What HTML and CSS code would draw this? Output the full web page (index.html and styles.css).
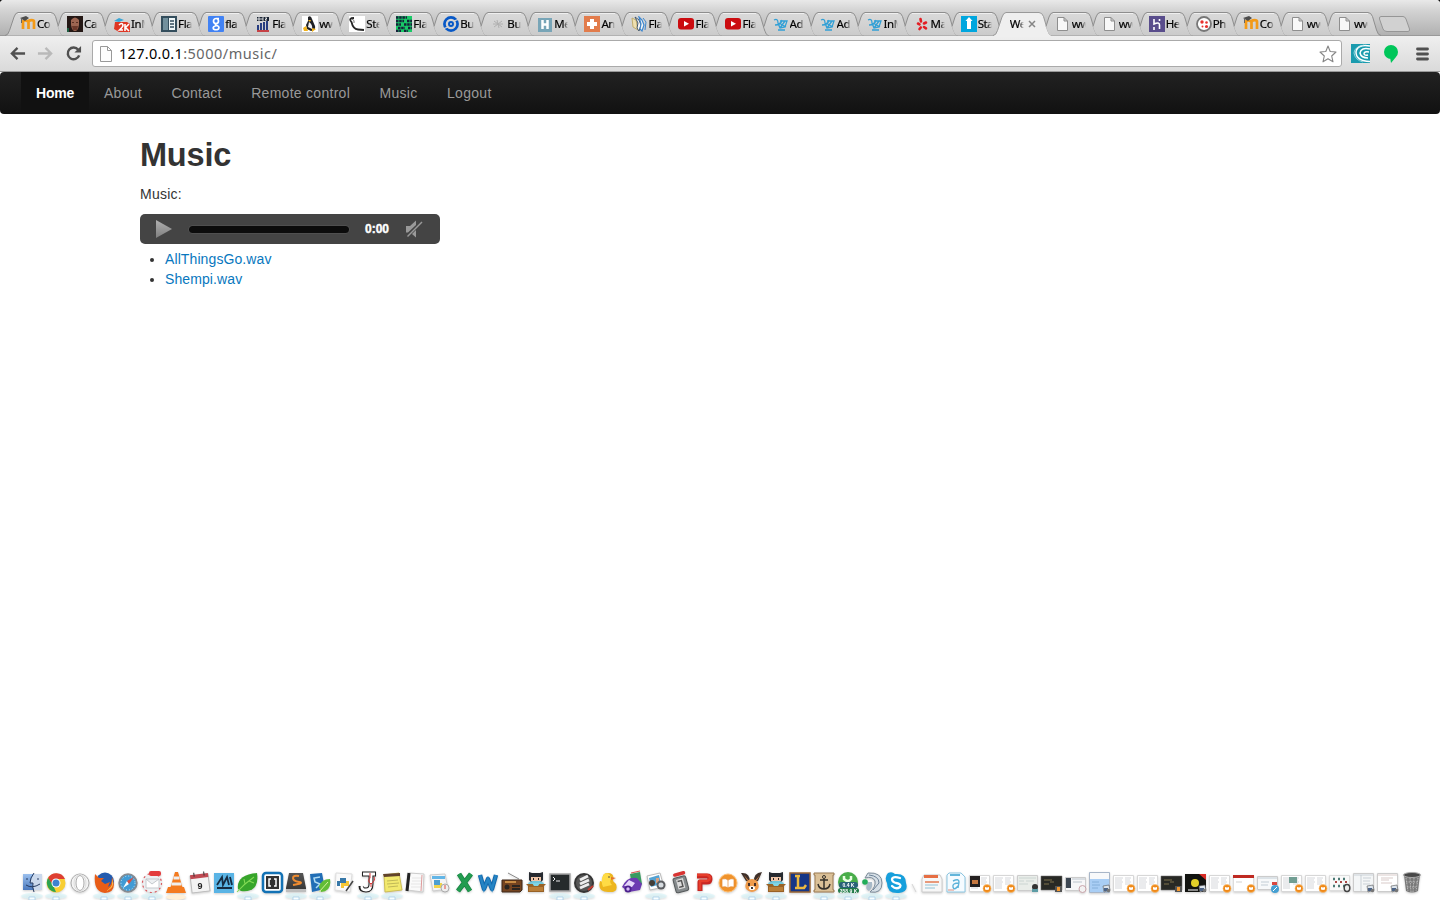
FILE: index.html
```html
<!DOCTYPE html>
<html lang="en">
<head>
<meta charset="utf-8">
<title>Welcome</title>
<link rel="stylesheet" href="styles.css">
</head>
<body>
<svg class="defs" width="0" height="0">
  <defs>
    <linearGradient id="tabfill" x1="0" y1="0" x2="0" y2="1"><stop offset="0" stop-color="#dadada"/><stop offset="1" stop-color="#cbcbcb"/></linearGradient>
    <linearGradient id="metal" x1="0" y1="0" x2="0" y2="1"><stop offset="0" stop-color="#b0b0b0"/><stop offset="1" stop-color="#7f7f7f"/></linearGradient>
    <linearGradient id="blue" x1="0" y1="0" x2="0" y2="1"><stop offset="0" stop-color="#9bc0ee"/><stop offset="1" stop-color="#4b79bd"/></linearGradient>
    <linearGradient id="dark" x1="0" y1="0" x2="0" y2="1"><stop offset="0" stop-color="#555"/><stop offset="1" stop-color="#333"/></linearGradient>
    <symbol id="tab" viewBox="0 0 60 24" overflow="visible"><path fill="url(#tabfill)" d="M6 14.5 9 5Q10.500 .5 13 .5H46Q49 .5 50.500 4.500L54.500 18Q56 23.500 59 23.500H12Q9 23.500 7.500 19Z"/><path fill="none" stroke="#8e8e8e" d="M6 14.500 9 5Q10.500 .5 13 .5H46Q49 .5 50.500 4.500L54.500 18Q56 23.500 59 23.500"/><path stroke="#efefef" d="M13 1.500H46"/></symbol>
    <symbol id="tab-first" viewBox="0 0 60 24" overflow="visible"><path fill="url(#tabfill)" stroke="#8e8e8e" d="M0 23.500Q3 23.500 4.500 18.500L9 5Q10.500 .5 13 .5H46Q49 .5 50.500 4.500L54.500 18Q56 23.500 59 23.500"/><path stroke="#efefef" d="M13 1.500H46"/></symbol>
    <symbol id="tab-active" viewBox="0 0 60 24" overflow="visible"><path fill="#efefef" stroke="#999" d="M0 23.500Q3 23.500 4.500 18.500L9 5Q10.500 .5 13 .5H46Q49 .5 50.500 4.500L54.500 18Q56 23.500 59 23.500"/><path stroke="#efefef" stroke-width="2" d="M1.500 24H57.500"/></symbol>

    <symbol id="f-moodle" viewBox="0 0 16 16"><path fill="none" stroke="#f39a17" stroke-width="2.700" d="M3 13V6q0-1.500 2-1.500T8.500 6V13M8.500 13V6q0-1.800 3-1.800T14 6V13"/><path fill="#4d4d4d" d="M0 2 6 0 9 2 5 5Z"/><path stroke="#666" d="M1.500 2V7"/></symbol>
    <symbol id="f-face" viewBox="0 0 16 16"><path fill="#241815" d="M0 0H16V16H0Z"/><path fill="#9d6652" d="M4 4Q8-1 12 4V9Q11 15 8 15T4 9Z"/><path fill="#6d3a2c" d="M5 10H11L10 14H6Z"/><path fill="#5a3024" d="M5 6H7V7H5ZM9 6H11V7H9Z"/><path fill="#1d5c40" d="M0 12H2V16H0Z"/></symbol>
    <symbol id="f-2k" viewBox="0 0 16 16"><path fill="#3aa5d5" d="M0 5 5 2 10 4 5 6Z"/><path fill="#df3724" d="M1 6H13L16 8V16H5L0 13Z"/><path fill="none" stroke="#fff" stroke-width="1.600" d="M5 9Q8 6 9 9 9 11 5.500 14H9M11 8V15M15 8 11.500 11.500 15 15"/></symbol>
    <symbol id="f-book" viewBox="0 0 16 16"><path fill="#344e5d" d="M0 0H16V16H0Z"/><path fill="#72909d" d="M2 2H7V14H2Z"/><path fill="#eef6f8" d="M8 2H14V14H8Z"/><path stroke="#344e5d" stroke-width="1.500" d="M9 5H13M9 8H13M9 11H13"/></symbol>
    <symbol id="f-google" viewBox="0 0 16 16"><rect width="16" height="16" rx="1" fill="#4182f4"/><path fill="none" stroke="#fff" stroke-width="1.700" d="M11 2.500H7.500M8 2.500A2.500 2.500 0 1 0 8 7.500 2.500 2.500 0 1 0 8 2.500M7.500 7.500Q7 9 9 9.500 12 11 10.500 13 8 14.500 5.500 13 4 10.500 9 9.500"/></symbol>
    <symbol id="f-dc" viewBox="0 0 16 16"><path fill="#192333" d="M2 1H14V5H2Z"/><path fill="none" stroke="#fff" stroke-width=".8" d="M3 2H5V4H3ZM9 2H7V4H9M10 2H12L10 4H12"/><path stroke="#263c80" stroke-width="2" d="M3 9V14M6 7V14M9 6V14M12 5V14"/><path stroke="#c64145" stroke-width="2" d="M2 15H14"/></symbol>
    <symbol id="f-tux" viewBox="0 0 16 16"><path fill="#fff" d="M0 0H16V16H0Z"/><path fill="#202124" d="M6 1Q9-1 10 3L13 10Q14 14 9 15L5 13 4 9 6 5Z"/><path fill="#f2f2f2" d="M7 6Q11 9 10 13L6 11Z"/><path fill="#f1b21b" d="M6 4H9L8 6ZM1 12 4 10 6 15 2 15ZM10 12 14 13 10 16Z"/></symbol>
    <symbol id="f-horn" viewBox="0 0 16 16"><path fill="#fff" d="M0 0H16V16H0Z"/><path fill="none" stroke="#262626" stroke-width="1.800" d="M5 2Q-1 2 2.500 6 4 13 9 13.500L15 14"/><path fill="none" stroke="#777" d="M3 3Q6 4 5 7"/></symbol>
    <symbol id="f-grid" viewBox="0 0 16 16"><path fill="#19c967" d="M0 0H16V16H0Z"/><path stroke="#15213a" stroke-width="2.300" stroke-dasharray="2.500 .7" d="M0 1.500H11M0 5H8M11 5H16M0 8.500H5M8 8.500H16M2 12H9M12 12H16M0 15H5M8 15H12"/></symbol>
    <symbol id="f-swirl" viewBox="0 0 16 16"><circle cx="8" cy="8" r="6.600" fill="none" stroke="#0758c7" stroke-width="2.700"/><circle cx="8" cy="8" r="2" fill="none" stroke="#0758c7" stroke-width="2"/><path stroke="#d5d5d5" stroke-width="1.200" d="M0 13 5 11M11 5 16 3"/></symbol>
    <symbol id="f-spark" viewBox="0 0 16 16"><path stroke="#b0b0b0" d="M4 5 12 11M4 11 12 5M7 4 9 12M3 8 13 8"/></symbol>
    <symbol id="f-h" viewBox="0 0 16 16"><path fill="#78a5b7" d="M1 2H15V16H1Z"/><path fill="none" stroke="#fff" stroke-width="2.500" d="M5.500 4V13M10.500 4V13M5 8.500H11"/></symbol>
    <symbol id="f-plus" viewBox="0 0 16 16"><path fill="#e27c4c" d="M0 0H16V16H0Z"/><path stroke="#fff" stroke-width="4" d="M8 3V13M3 8H13"/></symbol>
    <symbol id="f-pages" viewBox="0 0 16 16"><path fill="#eee0b0" stroke="#c1ad6e" d="M1 2 5 4 7 14 2 11Z"/><path fill="#f5f5f5" stroke="#43576c" d="M4 1 8 4 10 9 8 15 6 12 7 7Z"/><path fill="#f5f5f5" stroke="#3d87cf" stroke-width="1.200" d="M8 1 11 4 13 9 11 15 9 13 10 8Z"/><path fill="none" stroke="#3d87cf" d="M12 2 15 6 14 14"/></symbol>
    <symbol id="f-yt" viewBox="0 0 16 16"><rect y="2" width="16" height="11.500" rx="3" fill="#cb0c10"/><path fill="#fff" d="M6 5 11 7.800 6 10.500Z"/></symbol>
    <symbol id="f-cart" viewBox="0 0 16 16"><path fill="none" stroke="#32a0d6" stroke-width="1.300" d="M1 4Q5 2 5 7L7 12 12 11 14 5 7 5M2 9Q8 9 9 4M6 7 13 11M12 5 7 12M5 14H12"/></symbol>
    <symbol id="f-yelp" viewBox="0 0 16 16"><path stroke="#e31d23" stroke-width="2.600" stroke-linecap="round" d="M6.500 3 7 5.500M4 7.500 5.500 8.300M5.500 13 6.800 11.500M10 7.500 12 6.500M10 11 12 12.300"/></symbol>
    <symbol id="f-arrow" viewBox="0 0 16 16"><path fill="#00a6de" d="M0 0H16V16H0Z"/><path fill="#fff" d="M8 1 11.500 5H10V13H6V5H4.500Z"/></symbol>
    <symbol id="f-file" viewBox="0 0 16 16"><path fill="#f8f8f8" stroke="#8e8e8e" d="M2.500 1.500H9L12.500 5V14.500H2.500ZM9 1.500V5H12.500"/></symbol>
    <symbol id="f-heroku" viewBox="0 0 16 16"><path fill="#594d8c" d="M0 0H16V16H0Z"/><path fill="none" stroke="#fff" stroke-width="1.600" d="M5 3V8Q10.500 5.500 10.500 9V13M5 11V14M10.500 3V5"/></symbol>
    <symbol id="f-phi" viewBox="0 0 16 16"><circle cx="8" cy="8" r="7" fill="#fff" stroke="#777" stroke-width="1.800"/><g fill="#e8302c"><circle cx="6" cy="6" r="1.700"/><circle cx="10.500" cy="6.500" r="1.300"/><circle cx="6.500" cy="10.500" r="1"/><circle cx="10.500" cy="10.500" r="1.600"/></g></symbol>

    <symbol id="octo" viewBox="0 0 24 30"><path fill="#272b31" d="M5 2 8 3H16L19 2V10L17 12H7L5 10Z"/><path fill="#f1c5a7" d="M7 7H17V11H7Z"/><path fill="#222" d="M9 8H10V10H9ZM14 8H15V10H14Z"/><path fill="#72c7dc" d="M4 13 8 11H16L20 13 18 17H6Z"/><path fill="#986226" d="M2 14H22L20 16V22H4V16Z"/><path fill="#b97e38" d="M5 17H19V21H5Z"/><path fill="#80d5e5" d="M8 13H16L14 16H10Z"/></symbol>
    <symbol id="doc" viewBox="0 0 24 30"><path fill="#fff" stroke="#d7d7d7" d="M1.500 5.500H21.500V21.500H1.500Z"/><path stroke="#c3c5cc" stroke-width=".7" d="M3 8H11M13 8H19M3 10H10M13 10H18M3 12H11M13 12H19M3 14H10M3 16H10M13 14H18M3 18H10"/></symbol>
    <symbol id="badge" viewBox="0 0 24 30"><circle cx="19" cy="18.500" r="4" fill="#ef8919" stroke="#f9bd70" stroke-width=".6"/><path fill="#fff" d="M17 17 19 17.500 21 17V19.500L19 20 17 19.500Z"/></symbol>
    <symbol id="badge-photo" viewBox="0 0 24 30"><path fill="#dce4ec" stroke="#555" stroke-width=".6" d="M15 16 21 15 22 20 16 22Z"/><path fill="#4c6488" d="M16 18H20V21H16Z"/><circle cx="20.500" cy="20.500" r="1.800" fill="#767676"/></symbol>
    <symbol id="term" viewBox="0 0 24 30"><path fill="#282925" stroke="#777" stroke-width=".5" d="M1 6H22V20H1Z"/><path stroke="#a5925b" stroke-width=".7" d="M4 10H12M4 14H9M10 12H14"/><path fill="#555" d="M15 16H22V22H15Z"/><path fill="#f39a32" d="M17 17H20V21H17Z"/></symbol>
    <symbol id="run" viewBox="0 0 24 30"><ellipse cx="12" cy="26" rx="11" ry="3" fill="#d9f6fb" opacity=".65"/><path fill="#f9feff" stroke="#aacfea" stroke-width=".8" d="M9 27H15V30H9Z"/></symbol>
  </defs>
</svg>

<header class="tabs">
  <div class="tab"><svg class="shape"><use href="#tab-first"/></svg><svg class="fav"><use href="#f-moodle"/></svg><span>Co</span></div>
  <div class="tab"><svg class="shape"><use href="#tab"/></svg><svg class="fav"><use href="#f-face"/></svg><span>Ca</span></div>
  <div class="tab"><svg class="shape"><use href="#tab"/></svg><svg class="fav"><use href="#f-2k"/></svg><span>InM</span></div>
  <div class="tab"><svg class="shape"><use href="#tab"/></svg><svg class="fav"><use href="#f-book"/></svg><span>Fla</span></div>
  <div class="tab"><svg class="shape"><use href="#tab"/></svg><svg class="fav"><use href="#f-google"/></svg><span>fla</span></div>
  <div class="tab"><svg class="shape"><use href="#tab"/></svg><svg class="fav"><use href="#f-dc"/></svg><span>Fla</span></div>
  <div class="tab"><svg class="shape"><use href="#tab"/></svg><svg class="fav"><use href="#f-tux"/></svg><span>ww</span></div>
  <div class="tab"><svg class="shape"><use href="#tab"/></svg><svg class="fav"><use href="#f-horn"/></svg><span>Ste</span></div>
  <div class="tab"><svg class="shape"><use href="#tab"/></svg><svg class="fav"><use href="#f-grid"/></svg><span>Fla</span></div>
  <div class="tab"><svg class="shape"><use href="#tab"/></svg><svg class="fav"><use href="#f-swirl"/></svg><span>Bu</span></div>
  <div class="tab"><svg class="shape"><use href="#tab"/></svg><svg class="fav"><use href="#f-spark"/></svg><span>Bu</span></div>
  <div class="tab"><svg class="shape"><use href="#tab"/></svg><svg class="fav"><use href="#f-h"/></svg><span>Me</span></div>
  <div class="tab"><svg class="shape"><use href="#tab"/></svg><svg class="fav"><use href="#f-plus"/></svg><span>An</span></div>
  <div class="tab"><svg class="shape"><use href="#tab"/></svg><svg class="fav"><use href="#f-pages"/></svg><span>Fla</span></div>
  <div class="tab"><svg class="shape"><use href="#tab"/></svg><svg class="fav"><use href="#f-yt"/></svg><span>Fla</span></div>
  <div class="tab"><svg class="shape"><use href="#tab"/></svg><svg class="fav"><use href="#f-yt"/></svg><span>Fla</span></div>
  <div class="tab"><svg class="shape"><use href="#tab"/></svg><svg class="fav"><use href="#f-cart"/></svg><span>Ad</span></div>
  <div class="tab"><svg class="shape"><use href="#tab"/></svg><svg class="fav"><use href="#f-cart"/></svg><span>Ad</span></div>
  <div class="tab"><svg class="shape"><use href="#tab"/></svg><svg class="fav"><use href="#f-cart"/></svg><span>InM</span></div>
  <div class="tab"><svg class="shape"><use href="#tab"/></svg><svg class="fav"><use href="#f-yelp"/></svg><span>Ma</span></div>
  <div class="tab"><svg class="shape"><use href="#tab"/></svg><svg class="fav"><use href="#f-arrow"/></svg><span>Sta</span></div>
  <div class="tab active"><svg class="shape"><use href="#tab-active"/></svg><span>We</span><svg class="close" viewBox="0 0 8 8"><path stroke="#858585" stroke-width="1.500" d="M1 1 7 7M7 1 1 7"/></svg></div>
  <div class="tab"><svg class="shape"><use href="#tab"/></svg><svg class="fav"><use href="#f-file"/></svg><span>ww</span></div>
  <div class="tab"><svg class="shape"><use href="#tab"/></svg><svg class="fav"><use href="#f-file"/></svg><span>ww</span></div>
  <div class="tab"><svg class="shape"><use href="#tab"/></svg><svg class="fav"><use href="#f-heroku"/></svg><span>He</span></div>
  <div class="tab"><svg class="shape"><use href="#tab"/></svg><svg class="fav"><use href="#f-phi"/></svg><span>Ph</span></div>
  <div class="tab"><svg class="shape"><use href="#tab"/></svg><svg class="fav"><use href="#f-moodle"/></svg><span>Co</span></div>
  <div class="tab"><svg class="shape"><use href="#tab"/></svg><svg class="fav"><use href="#f-file"/></svg><span>ww</span></div>
  <div class="tab"><svg class="shape"><use href="#tab"/></svg><svg class="fav"><use href="#f-file"/></svg><span>ww</span></div>
  <svg class="newtab" viewBox="0 0 34 17"><path fill="#d1d1d1" stroke="#969696" d="M3 .5H25Q27 .5 28 3L31.500 13Q32 15.500 30 15.500H9Q6 15.500 5 13L1.500 3Q1 .5 3 .5Z"/></svg>
</header>

<div class="toolbar">
  <svg class="tool" viewBox="0 0 18 18"><path fill="none" stroke="#505050" stroke-width="2.400" d="M17 9H4M9 3 3 9 9 15"/></svg>
  <svg class="tool forward" viewBox="0 0 18 18"><path fill="none" stroke="#b9b9b9" stroke-width="2.400" d="M1 9H14M9 3 15 9 9 15"/></svg>
  <svg class="tool reload" viewBox="0 0 18 18"><path fill="none" stroke="#505050" stroke-width="2.600" d="M14 5A6.200 6.200 0 1 0 15 11"/><path fill="#505050" d="M17 1V8H10Z"/></svg>
  <div class="address">
    <svg class="page" viewBox="0 0 12 16"><path fill="#fcfcfc" stroke="#999" d="M.5.5H7.500L11.500 4.500V15.500H.5ZM7.500.5V4.500H11.500"/></svg>
    <span class="url"><b>127.0.0.1</b>:5000/music/</span>
    <svg class="star" viewBox="0 0 18 18"><path fill="#fff" stroke="#858585" stroke-width="1.100" stroke-linejoin="round" d="M9 1 11.200 6.500 17 7 12.700 11 14 16.800 9 13.800 4 16.800 5.300 11 1 7 6.800 6.500Z"/></svg>
  </div>
  <svg class="ext" viewBox="0 0 19 19"><path fill="#1b9bae" d="M0 0H19V19H0Z"/><path fill="none" stroke="#fff" stroke-width="1.500" d="M19 2Q6 0 5 8 5 17 19 17.500M19 5Q10 3 9 9 10 14 17 14M18 8Q13 7 13 10 14 12 17 11"/><path fill="none" stroke="#aee4e9" stroke-width=".8" d="M13 1Q3 3 3 9 4 16 12 18"/></svg>
  <svg class="bubble" viewBox="0 0 14 18"><path fill="#00c65a" d="M7 0A7 7 0 1 1 7 14 7 7 0 1 1 7 0ZM6 12H12L7 18Z"/></svg>
  <svg class="menu" viewBox="0 0 13 14"><path stroke="#505050" stroke-width="2.800" stroke-linecap="round" d="M1.500 2H11.500M1.500 7H11.500M1.500 12H11.500"/></svg>
</div>

<nav class="navbar">
  <a class="current">Home</a><a>About</a><a>Contact</a><a>Remote control</a><a>Music</a><a>Logout</a>
</nav>

<main>
  <h1>Music</h1>
  <p>Music:</p>
  <div class="player">
    <svg class="play" viewBox="0 0 16 18"><path fill="url(#metal)" d="M0 0 16 9 0 18Z"/></svg>
    <div class="track"></div>
    <span class="time">0:00</span>
    <svg class="mute" viewBox="0 0 17 18"><path fill="#999" d="M0 6H4L10 .5V5L2 12.500H0ZM6 14 10 10V17.500Z"/><path stroke="#999" stroke-width="1.500" d="M1.500 16.500 16 2"/></svg>
  </div>
  <ul><li><a>AllThingsGo.wav</a></li><li><a>Shempi.wav</a></li></ul>
</main>

<footer class="dock">
  <svg viewBox="0 0 24 30"><use href="#run"/><path fill="url(#blue)" d="M3 4H22V20H3Z"/><path fill="#cbd9ec" d="M14 4H22V20H14Q12 15 13 13H10Q11 8 14 4Z"/><path fill="none" stroke="#263b61" d="M14 3Q10 8 10 13H13Q12 17 14 22M7 8V10M18 8V10M6 15Q12 19 20 14"/></svg>
  <svg viewBox="0 0 24 30"><use href="#run"/><circle cx="12" cy="13" r="9.500" fill="#f8ce32"/><path fill="#de3e32" d="M4 8A9.500 9.500 0 0 1 21 9H12L8 15Z"/><path fill="#2ca250" d="M4 8 9 15 12 22A9.500 9.500 0 0 1 4 8Z"/><circle cx="12" cy="13" r="4.500" fill="#fff"/><circle cx="12" cy="13" r="3.500" fill="#3d82cf"/></svg>
  <svg viewBox="0 0 24 30"><circle cx="12" cy="13" r="9" fill="#f4f4f4" stroke="#ababab"/><ellipse cx="12" cy="13" rx="4" ry="7.500" fill="#fff" stroke="#aaa"/><ellipse cx="12" cy="13" rx="6" ry="8.500" fill="none" stroke="#ddd"/></svg>
  <svg viewBox="0 0 24 30"><use href="#run"/><circle cx="13" cy="11.500" r="9" fill="#245bae"/><path fill="#e85d17" d="M3 4 7 8 12 8 9 11 13 14 18 12 16 17Q20 15 20 7 26 22 13 23 1 22 3 4Z"/><path fill="#ffc34a" d="M20 8Q24 19 13 21 22 18 20 8Z"/></svg>
  <svg viewBox="0 0 24 30"><use href="#run"/><circle cx="12" cy="13" r="8.800" fill="#419bd5" stroke="#858b91" stroke-width="1.800"/><circle cx="12" cy="13" r="7" fill="none" stroke="#c7e7f7" stroke-dasharray="1 2"/><path fill="#fff" d="M7 18 11 11 13 14Z"/><path fill="#df4e3f" d="M18 7 11 11 13 14Z"/></svg>
  <svg viewBox="0 0 24 30"><use href="#run"/><circle cx="12" cy="13" r="9.500" fill="#edf0f2" stroke="#d95b61" stroke-width="1.200" stroke-dasharray="2 3"/><path fill="#fff" stroke="#c5c9cd" d="M6 9H19V18H6ZM6 9 12 14 19 9"/><rect x="9" y="1" width="12" height="5" rx="2" fill="#e33c3d"/></svg>
  <svg viewBox="0 0 24 30"><ellipse cx="12" cy="27" rx="10" ry="3" fill="#fff0d8"/><path fill="#f47b20" d="M11 2H14L19 19H6ZM4 17H20L22 23H2Z"/><path stroke="#eee" stroke-width="3" d="M9.500 8H15.500M7.500 14H17.500"/></svg>
  <svg viewBox="0 0 24 30"><g transform="rotate(-7 12 13)"><path fill="#f3f3f3" stroke="#bbb" d="M3 5H21V22H3Z"/><path fill="#bf4a52" d="M3 4H21V8H3Z"/><path stroke="#333" d="M7 2V6M17 2V6"/></g><text x="12" y="18.500" class="date">9</text></svg>
  <svg viewBox="0 0 24 30"><path fill="#5ab4e5" d="M2 3H22V23H2Z"/><path fill="none" stroke="#152c42" stroke-width="1.800" d="M5 15 10 7 11 15 15 7 17 15M18 7 20 15M5 18H20"/></svg>
  <svg viewBox="0 0 24 30"><use href="#run"/><path fill="#37a52b" d="M2 19Q0 5 21 3 24 23 5 21Z"/><path fill="none" stroke="#84db55" stroke-width="1.100" d="M1 22Q8 14 18 7M9 14 8 9M13 11 18 13"/></svg>
  <svg viewBox="0 0 24 30"><rect x="3" y="3" width="19" height="19" rx="3" fill="#fff" stroke="#1372b5" stroke-width="2.500"/><path fill="#333" d="M6 6H19V19H6Z"/><path fill="none" stroke="#fff" stroke-width="1.500" d="M11 9H9V16H11M14 9H16V16H14"/></svg>
  <svg viewBox="0 0 24 30"><use href="#run"/><path fill="url(#dark)" d="M5 3H19L22 18V22H2V18Z"/><path fill="#bdbdbd" d="M2 19H22V22H2Z"/><path fill="none" stroke="#ee8b30" stroke-width="2" d="M15 6Q9 5 9 8T15 12 9 15"/></svg>
  <svg viewBox="0 0 24 30"><use href="#run"/><path fill="#216eb6" d="M2 4 14 3 17 19 4 22Z"/><path fill="none" stroke="#b0dcf4" stroke-width="1.500" d="M12 7 6 8 7 12 12 14 8 18"/><path fill="#62bd36" d="M11 17Q13 9 22 9 24 21 13 22Z"/><path stroke="#d7f3a0" d="M11 22 20 12"/></svg>
  <svg viewBox="0 0 24 30"><path fill="#fafafa" stroke="#ddd" d="M4 3 20 4 18 22 3 20Z"/><path fill="#3778a8" d="M8 8H14V13H8V16H5V11H8Z"/><path fill="#f6c736" d="M14 11H17V16H12V18H9V13H14Z"/><path stroke="#454545" stroke-width="1.500" d="M14 21 21 11"/></svg>
  <svg viewBox="0 0 24 30"><use href="#run"/><path fill="none" stroke="#222" stroke-width="5" d="M6 4H20M15 4V14Q15 20 10 20T5 16"/><path fill="none" stroke="#fff" stroke-width="2.800" d="M7 4H19M15 4V14Q15 20 10 20T6 16"/><path fill="none" stroke="#d63434" d="M14 3V8Q11 11 15 14 20 10 18 7M15 14V17"/></svg>
  <svg viewBox="0 0 24 30"><use href="#run"/><path fill="#f2e96e" stroke="#cdbd55" d="M4 5 19 3 22 20 5 22Z"/><path fill="#61432b" d="M3 4 20 3V6L4 7Z"/><path stroke="#aaa44d" stroke-width=".7" d="M7 11 18 10M7 14 19 13M8 17 18 16"/></svg>
  <svg viewBox="0 0 24 30"><path fill="#fafafa" stroke="#ccc" d="M5 3 20 4 19 22 3 20Z"/><path stroke="#222" stroke-width="3" d="M5 3 3 21"/><path stroke="#ddd" stroke-width=".7" d="M8 8H18M8 11H18M7 14H17M7 17H17"/><path stroke="#df9a9a" d="M18 5 17 21"/></svg>
  <svg viewBox="0 0 24 30"><path fill="#f4f4f4" stroke="#ccc" d="M2 5 17 4 20 19 5 21Z"/><path fill="#63b6e7" d="M4 6H17V9H4Z"/><path fill="#efd34d" d="M6 13H14V18H6Z"/><path fill="#4c9fd1" d="M6 10H12V15H6Z"/><circle cx="17" cy="18" r="4" fill="#eee" stroke="#aaa"/><path stroke="#df5148" d="M17 15V19"/></svg>
  <svg viewBox="0 0 24 30"><path fill="none" stroke="#178442" stroke-width="5" d="M7 4 18 21M19 4 6 21"/><path fill="none" stroke="#229c50" stroke-width="3.500" d="M7 4 18 21M19 4 6 21"/></svg>
  <svg viewBox="0 0 24 30"><path fill="none" stroke="#1469ad" stroke-width="4.500" stroke-linejoin="round" d="M4 5 8 19 12 9 16 19 20 5"/><path fill="none" stroke="#2584c4" stroke-width="2.500" d="M4 5 8 19 12 9 16 19 20 5"/></svg>
  <svg viewBox="0 0 24 30"><path stroke="#888" d="M8 3 19 9"/><path fill="#754420" stroke="#3c2618" d="M2 10H22V20L20 22H2Z"/><path fill="#c78b43" d="M5 11H16V13H5Z"/><circle cx="7" cy="17" r="2.500" fill="#2b2520"/><path stroke="#2b2520" stroke-width="2" d="M12 16H20M12 19H20"/></svg>
  <svg viewBox="0 0 24 30"><use href="#octo"/></svg>
  <svg viewBox="0 0 24 30"><use href="#run"/><path fill="#262b2c" stroke="#a7a7a7" stroke-width="1.500" d="M2 4H22V21H2Z"/><path fill="none" stroke="#eee" d="M5 7 7 9 5 11M8 11H12"/></svg>
  <svg viewBox="0 0 24 30"><use href="#run"/><circle cx="12" cy="13" r="9" fill="#555" stroke="#353535" stroke-width="2"/><path stroke="#eee" stroke-width="3" d="M8 10 16 6M8 14 17 10M8 18 17 14"/><path stroke="#c63d33" stroke-width="2" d="M16 20 21 16"/></svg>
  <svg viewBox="0 0 24 30"><path fill="#edb61e" d="M7 12Q5 3 12 3T17 11L20 14Q23 23 12 22 1 22 4 11Z"/><path fill="#ffdc45" d="M8 4Q14 1 15 9 13 12 16 15L7 17Q4 10 8 4Z"/><circle cx="13" cy="7" r=".8" fill="#444"/><path fill="#e5732f" d="M15 7 20 8 15 10Z"/></svg>
  <svg viewBox="0 0 24 30"><path fill="#399a61" d="M10 4 20 2 22 14 12 16Z"/><path fill="#6c3ab1" d="M2 17Q7 6 17 8L22 14 20 20 9 22Z"/><path fill="#e5d6fa" d="M4 16 9 10 15 13 12 17Z"/><circle cx="8" cy="19" r="3.500" fill="#4b208e"/><circle cx="8" cy="19" r="1.700" fill="#d6baf7"/><path stroke="#df544e" d="M11 3 20 1"/></svg>
  <svg viewBox="0 0 24 30"><use href="#run"/><path fill="#fff" stroke="#bbb" d="M3 6 16 3 20 17 6 20Z"/><path fill="#55a2d2" d="M5 8 15 5 17 14 7 17Z"/><circle cx="8" cy="13" r="3" fill="#433d37"/><path fill="#d9a07f" d="M12 8H15V13H12Z"/><circle cx="17" cy="15" r="4.500" fill="#5b5d61"/><circle cx="17" cy="15" r="2.500" fill="#d8dde1"/></svg>
  <svg viewBox="0 0 24 30"><g transform="rotate(-15 12 13)"><rect x="6" y="7" width="13" height="15" rx="2" fill="#858a8c" stroke="#54585a"/><path fill="#ddd" d="M9 9H16V19H9Z"/><path fill="none" stroke="#555" stroke-width="1.500" d="M10 11H14V17H10"/><path stroke="#d93432" stroke-width="3.500" stroke-linecap="round" d="M9 4H18"/></g></svg>
  <svg viewBox="0 0 24 30"><use href="#run"/><path fill="none" stroke="#c82622" stroke-width="5" stroke-linejoin="round" d="M5 6H15Q18 6 18 9T15 12H8V21"/><path fill="none" stroke="#e63d2b" stroke-width="2.500" d="M5 5H15Q18 6 18 8T15 11H8V20"/></svg>
  <svg viewBox="0 0 24 30"><circle cx="12" cy="13" r="9" fill="#f0932b" stroke="#ffbd70"/><path fill="#fff" stroke="#e28b35" stroke-width=".7" d="M6 9Q10 8 12 10 15 8 18 9V17Q14 16 12 18 10 16 6 17ZM12 10V18"/></svg>
  <svg viewBox="0 0 24 30"><use href="#run"/><path fill="#3f3029" d="M1 3Q10 2 10 12L6 11ZM22 2Q13 3 14 12L18 11Z"/><path fill="#dc8a48" d="M4 5 9 11 7 10ZM20 5 15 11 17 10Z"/><path fill="#ef9c4c" d="M7 11Q12 7 17 11 22 20 12 22 2 20 7 11Z"/><path fill="#493228" d="M8 13H10V16H8ZM14 13H16V16H14Z"/><ellipse cx="12" cy="18" rx="3" ry="2" fill="#fff"/><path fill="#333" d="M11 17H13V19H11Z"/></svg>
  <svg viewBox="0 0 24 30"><use href="#run"/><use href="#octo"/></svg>
  <svg viewBox="0 0 24 30"><path fill="#163686" stroke="#9b6533" stroke-width="1.500" d="M2 3H22V22H2Z"/><path fill="none" stroke="#ecb940" stroke-width="2.500" d="M7 6H12M10 6V18H16L18 15M7 18H11"/></svg>
  <svg viewBox="0 0 24 30"><use href="#run"/><path fill="#dac097" stroke="#9a7b52" d="M2 3H22V5H21V20H22V22H2V20H3V5H2Z"/><path fill="none" stroke="#34302a" stroke-width="1.500" d="M12 9V19M8 10H16M6 14Q7 19 12 19T18 14"/><circle cx="12" cy="7" r="1.500" fill="none" stroke="#34302a"/></svg>
  <svg viewBox="0 0 24 30"><use href="#run"/><circle cx="12" cy="12" r="10" fill="#48ad49"/><path fill="none" stroke="#eaffe3" stroke-width="2.500" d="M8 6V9Q12 13 15 9V6"/><rect x="3" y="12" width="19" height="6" rx="3" fill="#286177"/><rect x="2" y="18" width="21" height="5" rx="2.500" fill="#207a47"/><text x="12.500" y="17" class="rate">0.4 K</text><text x="12.500" y="22.500" class="rate">358.9 K</text></svg>
  <svg viewBox="0 0 24 30"><use href="#run"/><path fill="#d6dfe6" stroke="#7b8b99" d="M8 3Q22 2 22 13T10 22Q16 17 15 11 13 6 5 8Z"/><path fill="none" stroke="#6c8298" d="M9 5Q19 6 19 13L13 20"/><path fill="#a8bac8" d="M8 12H12Q13 18 9 21 4 19 8 12Z"/><circle cx="5" cy="12" r="2.800" fill="#21ad59"/></svg>
  <svg viewBox="0 0 24 30"><use href="#run"/><path fill="#169fdc" d="M4 3Q8 1 11 4 22 3 22 13 25 22 15 23 3 24 3 13 0 7 4 3Z"/><path fill="none" stroke="#fff" stroke-width="2.300" stroke-linecap="round" d="M16 8Q9 6 8 9 8 12 12 13 18 14 16 17 12 20 8 16"/></svg>
  <svg class="divider" viewBox="0 0 12 30"><path stroke="#d5d5d5" d="M4 14 8 22"/></svg>
  <svg viewBox="0 0 24 30"><path fill="#f7f7f7" stroke="#ccc" d="M4 5H20L22 9V22H2V9Z"/><path fill="#e66e43" d="M4 5H18V8H4Z"/><path stroke="#e37a50" stroke-width="1.500" d="M5 12H19"/><path stroke="#91c2d6" d="M5 15H18M5 18H15"/></svg>
  <svg viewBox="0 0 24 30"><path fill="#f5fbff" stroke="#8dc7e2" d="M5 3H17L21 7V22H3V5Z"/><path stroke="#63b5da" stroke-width="2" d="M6 5H16"/><path fill="none" stroke="#5cb2d9" stroke-width="1.400" d="M9 11Q15 8 15 12L14 18M15 13Q8 13 9 17T14 16"/><path stroke="#df8c7b" d="M4 20H10"/></svg>
  <svg viewBox="0 0 24 30"><use href="#doc"/><path fill="#242020" d="M2 6H12V17H2Z"/><path fill="#c67840" d="M4 10H10V14H4Z"/><use href="#badge"/></svg>
  <svg viewBox="0 0 24 30"><use href="#doc"/><use href="#badge"/></svg>
  <svg viewBox="0 0 24 30"><path fill="#e9ede9" stroke="#ccc" d="M1.500 5.500H21.500V20.500H1.500Z"/><path stroke="#cbd5d2" d="M3 8H20M3 11H8M10 11H18M3 14H12"/><circle cx="19" cy="17" r="3" fill="#333"/><path fill="#5d9ca5" d="M16 19H22V22H16Z"/></svg>
  <svg viewBox="0 0 24 30"><use href="#term"/></svg>
  <svg viewBox="0 0 24 30"><path fill="#f7f7f8" stroke="#ccc" d="M1.500 7.500H21.500V20.500H1.500Z"/><path fill="#3c4652" d="M2 8H7V18H2Z"/><path stroke="#bcc5cd" d="M8 9H21M9 12H18"/><circle cx="18.500" cy="19" r="3.500" fill="#f2f2f2" stroke="#c9a4aa"/></svg>
  <svg viewBox="0 0 24 30"><path fill="#a9cef5" stroke="#a8b6c8" d="M1.500 2.500H21.500V22.500H1.500Z"/><path fill="#f8f9fa" d="M2 3H21V9H2Z"/><path stroke="#7ba8d3" stroke-width=".8" d="M4 12H11M4 15H12M4 18H10"/><use href="#badge-photo"/></svg>
  <svg viewBox="0 0 24 30"><use href="#doc"/><use href="#badge"/></svg>
  <svg viewBox="0 0 24 30"><use href="#doc"/><use href="#badge"/></svg>
  <svg viewBox="0 0 24 30"><use href="#term"/></svg>
  <svg viewBox="0 0 24 30"><path fill="#121310" d="M1 4H22V22H1Z"/><path fill="#d92c26" d="M15 4H22V10Z"/><circle cx="11" cy="13" r="4" fill="#e3cf28"/><path stroke="#fff" d="M4 20H14"/><use href="#badge-photo"/></svg>
  <svg viewBox="0 0 24 30"><use href="#doc"/><use href="#badge"/></svg>
  <svg viewBox="0 0 24 30"><path fill="#fff" stroke="#ddd" d="M1.500 5.500H21.500V21.500H1.500Z"/><path fill="#bf2a22" d="M1 5H22V8H1Z"/><path stroke="#d1d1d1" d="M4 12H10"/><use href="#badge"/></svg>
  <svg viewBox="0 0 24 30"><path fill="#f7f9fa" stroke="#ccc" d="M1.500 6.500H21.500V19.500H1.500Z"/><path stroke="#c2cdd5" d="M2 8H21M5 12H13M5 15H12"/><path fill="#d84840" d="M16 12H21V15H16Z"/><circle cx="19" cy="19" r="4" fill="#449fd2"/><path stroke="#fff" d="M17 21 21 17"/></svg>
  <svg viewBox="0 0 24 30"><use href="#doc"/><path fill="#719e93" d="M9 7H17V13H9Z"/><use href="#badge"/></svg>
  <svg viewBox="0 0 24 30"><use href="#doc"/><use href="#badge"/></svg>
  <svg viewBox="0 0 24 30"><path fill="#f9f9f9" stroke="#ddd" d="M1.500 5.500H21.500V20.500H1.500Z"/><path stroke="#4c7a75" stroke-width="2.500" stroke-dasharray="2 3" d="M5 9H20M5 16H17"/><path stroke="#a94744" stroke-width="2" stroke-dasharray="2 3" d="M7 12H21"/><ellipse cx="19" cy="18" rx="2.800" ry="3.500" fill="#eee" stroke="#444" stroke-width="1.500"/></svg>
  <svg viewBox="0 0 24 30"><path fill="#f4f6f7" stroke="#ccc" d="M1.500 3.500H21.500V21.500H1.500Z"/><path stroke="#b8c2c9" stroke-width=".7" d="M2 5H21M11 8H19M11 11H18M11 14H18M9 5V21"/><use href="#badge-photo"/></svg>
  <svg viewBox="0 0 24 30"><path fill="#fff" stroke="#ccc" d="M1.500 3.500H21.500V21.500H1.500Z"/><path stroke="#c9b4b2" stroke-width=".7" d="M2 5H21M5 8H17M5 10H13M5 13H16"/><use href="#badge-photo"/></svg>
  <svg viewBox="0 0 24 30"><path fill="#797979" d="M4 5H20L18 21Q12 24 6 21Z"/><ellipse cx="12" cy="5" rx="8.500" ry="2.500" fill="#484848" stroke="#aaa"/><path stroke="#bbb" stroke-dasharray="1.500 1" d="M6 8 8 21M10 8 11 22M14 8 13 22M18 8 16 21M6 12H18M7 17H17"/></svg>
</footer>
</body>
</html>
```

FILE: styles.css
```css
* { box-sizing: border-box; }
body {
  margin: 0;
  width: 1440px;
  height: 900px;
  overflow: hidden;
  display: flex;
  flex-direction: column;
  background: #fff;
  color: #333;
  font: 14px/20px "Liberation Sans", Arial, sans-serif;
}
svg { display: block; flex: none; }
.defs { position: absolute; }
.tabs {
  height: 36px;
  flex: none;
  display: flex;
  padding: 12px 0 0 5px;
  background: linear-gradient(#e9e9e9, #d4d4d4 10px, #b1b1b1 35px);
  border-bottom: 1px solid #999;
  border-radius: 4px 4px 0 0;
  box-shadow: 0 -4px 0 4px #111;
}
.tab {
  position: relative;
  flex: none;
  width: 47.04px;
  height: 24px;
  display: flex;
  align-items: center;
  padding: 0 0 0 15px;
  color: #000;
  font: 11.500px/16px "Noto Sans", sans-serif;
}
.shape { position: absolute; left: 0; top: 0; width: 60px; height: 24px; overflow: visible; }
.fav { position: relative; width: 16px; height: 16px; }
.tab span {
  position: relative;
  width: 14px;
  margin-left: 1px;
  white-space: nowrap;
  letter-spacing: -.4px;
  -webkit-text-stroke: .2px #000;
  -webkit-mask-image: linear-gradient(90deg, #000 65%, transparent);
  mask-image: linear-gradient(90deg, #000 65%, transparent);
}
.tab.active { padding-left: 16px; }
.close { position: relative; width: 8px; height: 8px; margin-left: 4px; }
.newtab { width: 34px; height: 17px; margin: 4px 0 0 9px; }
.toolbar {
  height: 36px;
  flex: none;
  display: flex;
  align-items: center;
  padding: 0 11px 0 9px;
  background: linear-gradient(#efefef, #dadada);
  border-bottom: 1px solid #999;
}
.tool { width: 17px; height: 17px; }
.forward { margin-left: 11px; }
.reload { margin-left: 11px; }
.address {
  flex: 1;
  height: 27px;
  margin-left: 10px;
  padding: 0 4px 0 7px;
  display: flex;
  align-items: center;
  background: #fff;
  border: 1px solid #aaa;
  border-radius: 3px;
}
.page { width: 12px; height: 16px; }
.url { flex: 1; margin: -2px 0 0 7px; color: #666; font: 14.500px/20px "Noto Sans", sans-serif; letter-spacing: .52px; }
.url b { color: #000; font-weight: 400; letter-spacing: .3px; }
.star { width: 18px; height: 18px; }
.ext { width: 19px; height: 19px; margin-left: 9px; }
.bubble { width: 14px; height: 18px; margin-left: 14px; }
.menu { width: 13px; height: 14px; margin-left: 18px; }
.navbar {
  flex: none;
  height: 42px;
  display: flex;
  padding-left: 21px;
  background: linear-gradient(#222, #111);
  border-radius: 4px;
  color: #999;
  letter-spacing: .28px;
}
.navbar a { padding: 11px 14.500px 11px 15px; }
.navbar .current { width: 68px; background: #111; color: #fff; font-weight: 700; letter-spacing: -.2px; }
main { flex: 1; padding: 21px 140px 0; letter-spacing: .25px; }
h1 { margin: 0 0 9px; font-size: 32.500px; line-height: 40px; letter-spacing: -.2px; }
p { margin: 0 0 10px; }
.player {
  width: 300px;
  height: 30px;
  display: flex;
  align-items: center;
  padding-left: 16px;
  border-radius: 5px;
  background: #444;
}
.play { width: 16px; height: 18px; }
.track { width: 160px; height: 7px; margin-left: 17px; border-radius: 4px; background: #0c0c0c; box-shadow: 0 0 0 .5px #5b5b5b; }
.time { width: 57px; padding-left: 16px; color: #fff; font-size: 12px; font-weight: 700; letter-spacing: 0; -webkit-text-stroke: .4px #fff; }
.mute { width: 17px; height: 18px; }
ul { margin: 5px 0 0; padding: 0 0 0 25px; letter-spacing: .1px; }
a { color: inherit; }
li a { color: #0877be; }
.dock { flex: none; height: 30px; display: flex; padding-left: 20px; }
.dock svg { width: 24px; height: 30px; filter: drop-shadow(0 1px 1px rgba(0, 0, 0, .2)); }
.dock .divider { width: 12px; }
.date { font: 700 9px "Liberation Sans", sans-serif; text-anchor: middle; fill: #222; }
.rate { font: 700 5px "Liberation Sans", sans-serif; text-anchor: middle; fill: #fff; }
```
